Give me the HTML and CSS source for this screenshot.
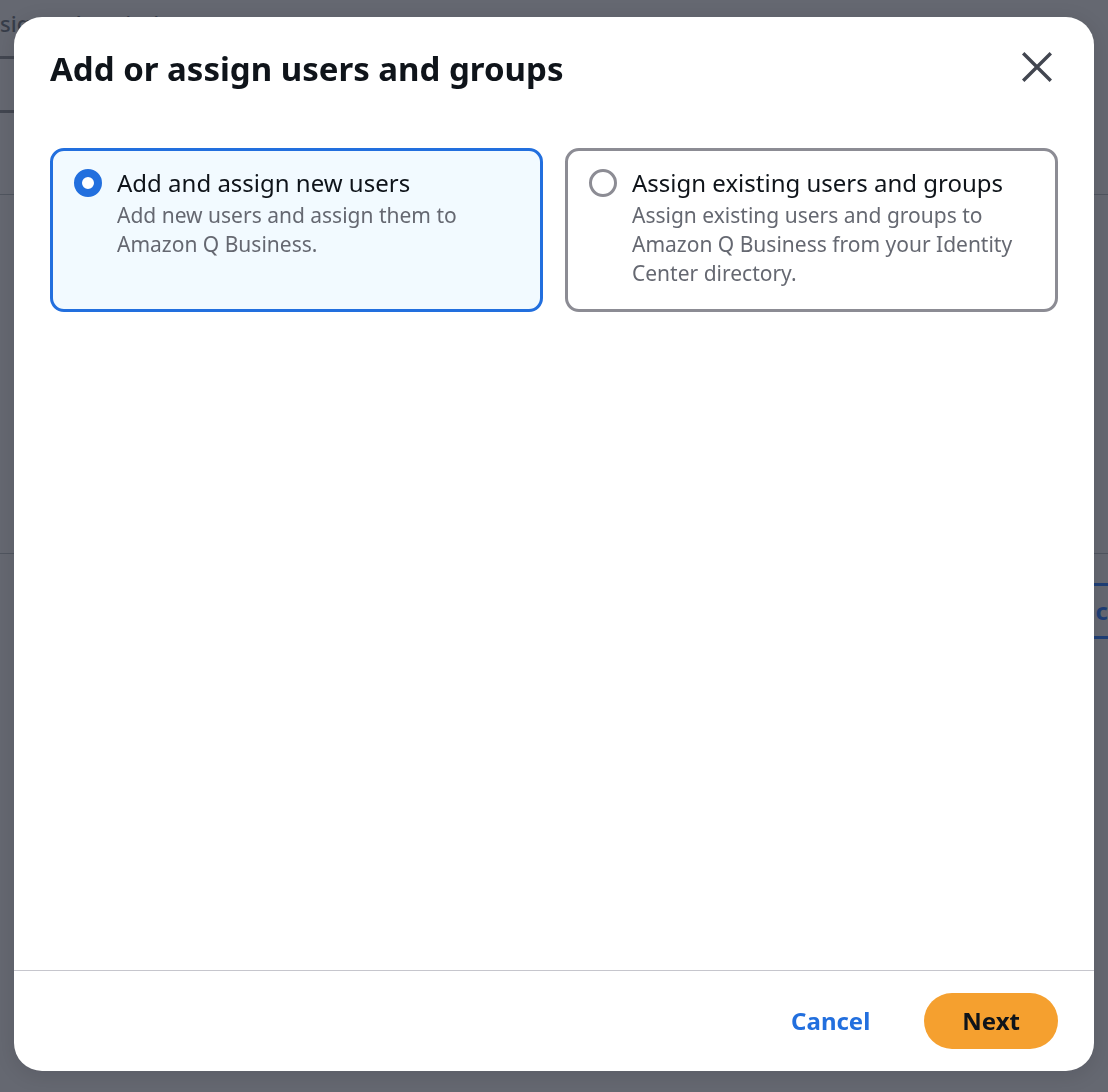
FILE: index.html
```html
<!DOCTYPE html>
<html lang="en">
<head>
<meta charset="utf-8">
<meta name="viewport" content="width=device-width, initial-scale=1">
<title>Add or assign users and groups</title>
<link rel="stylesheet" href="styles.css">
</head>
<body>
<div class="page" aria-hidden="true">
  <div class="page-form">
    <div class="page-label">sign a description</div>
    <div class="page-input"></div>
  </div>
  <div class="page-panel"></div>
  <div class="page-actions"><button class="page-button" type="button" tabindex="-1">c</button></div>
</div>
<div class="overlay">
  <form class="modal" role="dialog" aria-modal="true" aria-labelledby="modal-title">
    <header class="modal-header">
      <h1 class="modal-title" id="modal-title">Add or assign users and groups</h1>
      <button class="close" type="button" aria-label="Close">
        <svg width="32" height="32" viewBox="0 0 32 32" fill="none" stroke="currentColor" stroke-width="3.4"><path d="M2.2 2.2l27.6 27.6M29.8 2.2L2.2 29.8"/></svg>
      </button>
    </header>
    <div class="modal-body">
      <div class="tiles">
        <label class="tile">
          <input class="radio" type="radio" name="mode" checked>
          <span class="tile-text">
            <span class="tile-label">Add and assign new users</span>
            <span class="tile-description">Add new users and assign them to Amazon Q Business.</span>
          </span>
        </label>
        <label class="tile">
          <input class="radio" type="radio" name="mode">
          <span class="tile-text">
            <span class="tile-label">Assign existing users and groups</span>
            <span class="tile-description">Assign existing users and groups to Amazon Q Business from your Identity Center directory.</span>
          </span>
        </label>
      </div>
    </div>
    <footer class="modal-footer">
      <button class="button button-link" type="button">Cancel</button>
      <button class="button button-primary" type="submit">Next</button>
    </footer>
  </form>
</div>
</body>
</html>
```
FILE: styles.css
```css
* {
  box-sizing: border-box;
}

body {
  margin: 0;
  background: #656871;
  color: #0f141a;
  font-family: "Noto Sans", "Open Sans", sans-serif;
  overflow: hidden;
}

.page {
  min-height: 100vh;
  overflow: hidden;
}

.page-form {
  height: 195px;
  padding-top: 8px;
  border-bottom: 1px solid #50555f;
}

.page-label {
  color: #373d49;
  font-size: 22px;
  font-weight: 500;
  line-height: 30px;
  white-space: nowrap;
}

.page-input {
  height: 57px;
  margin: 18px 36px 0 0;
  border: solid #424650;
  border-width: 3px 0;
}

.page-panel {
  height: 359px;
  border-bottom: 1px solid #50555f;
}

.page-actions {
  display: flex;
  justify-content: flex-end;
  padding-top: 29px;
}

.page-button {
  height: 56px;
  padding: 0 0 0 24px;
  border: solid #1f3f76;
  border-width: 3px 0;
  background: none;
  color: #1f3f76;
  font: 700 24px/32px "Noto Sans", "Open Sans", sans-serif;
}

.overlay {
  position: fixed;
  inset: 0;
  display: flex;
  padding: 17px 14px 21px;
}

.modal {
  display: flex;
  flex: 1;
  flex-direction: column;
  overflow: hidden;
  border-radius: 28px;
  background: #fff;
  box-shadow: 0 4px 20px 1px rgba(0, 7, 22, 0.1);
}

.modal-header {
  display: flex;
  align-items: flex-start;
  justify-content: space-between;
  padding: 30px 36px 0;
}

.modal-title {
  margin: 0;
  font-size: 33px;
  font-weight: 700;
  line-height: 44px;
}

.close {
  display: flex;
  padding: 4px 5px;
  border: 0;
  background: none;
  color: #424650;
}

.modal-body {
  flex: 1;
  padding: 57px 36px 36px;
}

.tiles {
  display: grid;
  grid-template-columns: 1fr 1fr;
  gap: 22px;
}

.tile {
  display: flex;
  gap: 15px;
  min-height: 164px;
  padding: 17px 21px;
  border: 3px solid #8c8c94;
  border-radius: 14px;
}

.tile:has(.radio:checked) {
  border-color: #226fde;
  background: #f2faff;
}

.radio {
  flex: none;
  width: 28px;
  height: 28px;
  margin: 1px 0 0;
  border: 3px solid #8c8c94;
  border-radius: 50%;
  background: #fff;
  appearance: none;
}

.radio:checked {
  border: 8px solid #226fde;
}

.tile-text {
  display: flex;
  flex-direction: column;
  gap: 3px;
}

.tile-label {
  font-size: 24px;
  line-height: 30px;
}

.tile-description {
  color: #656871;
  font-size: 21px;
  line-height: 29px;
}

.modal-footer {
  display: flex;
  justify-content: flex-end;
  gap: 16px;
  padding: 22px 36px;
  border-top: 1px solid #c6c6cd;
}

.button {
  height: 56px;
  padding: 0 38px;
  border: 0;
  border-radius: 28px;
  font: 700 24px/32px "Noto Sans", "Open Sans", sans-serif;
}

.button-link {
  background: none;
  color: #226fde;
}

.button-primary {
  background: #f5a02f;
  color: #0f141a;
}
```
